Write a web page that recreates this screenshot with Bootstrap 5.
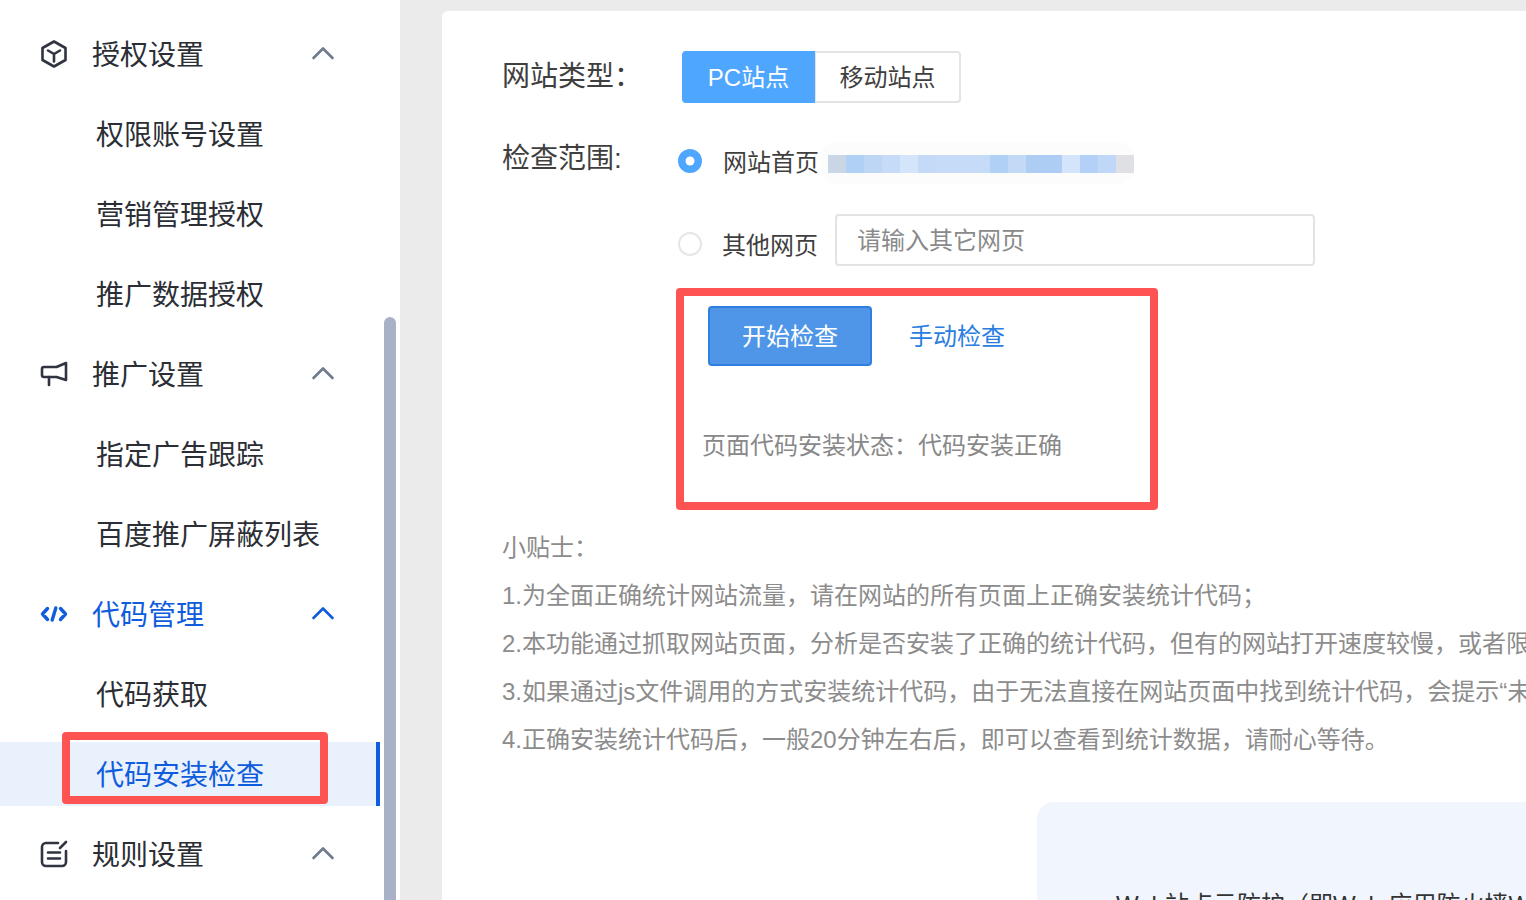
<!DOCTYPE html>
<html lang="zh-CN">
  <head>
    <meta charset="UTF-8" />
    <meta name="viewport" content="width=device-width, initial-scale=1.0" />
    <title>代码安装检查</title>
    <link
      href="https://cdn.jsdelivr.net/npm/bootstrap@5.3.0/dist/css/bootstrap.min.css"
      rel="stylesheet"
    />
    <style>
      html,
      body {
        height: 900px;
        overflow: hidden;
      }
      body {
        background: #ebebeb;
        font-family: "Liberation Sans", "Noto Sans CJK SC", sans-serif;
        color: #3a3a3a;
      }
      .side-panel {
        width: 400px;
        height: 900px;
        background: #fff;
      }
      .side-menu {
        width: 380px;
        padding-top: 22px;
      }
      .side-row {
        height: 64px;
        margin-bottom: 16px;
        font-size: 28px;
        color: #2b2e35;
        position: relative;
      }
      .side-head {
        padding-left: 40px;
      }
      .side-head .side-text {
        margin-left: 24px;
        width: 219px;
        padding-top: 4px;
      }
      .side-sub {
        padding-left: 96px;
        padding-top: 4px;
      }
      .side-head svg {
        display: block;
        fill: none;
        stroke: #2f3440;
        stroke-width: 2.6;
        stroke-linecap: round;
        stroke-linejoin: round;
      }
      .side-head .chevron {
        stroke: #6f7a8c;
        margin-top: -2px;
      }
      .side-head .code-icon {
        stroke-width: 3.4;
      }
      .side-open {
        color: #0f5cdc;
      }
      .side-open svg,
      .side-open .chevron {
        stroke: #0f5cdc;
      }
      .side-active {
        background: #e9f1fd;
        color: #0f5cdc;
        border-right: 4px solid #0f5cdc;
      }
      .mark-menu {
        position: absolute;
        left: 62px;
        top: -10px;
        width: 266px;
        height: 72px;
        border: 8px solid #fd5353;
        border-radius: 4px;
      }
      .scroll-thumb {
        width: 12px;
        height: 583px;
        margin-top: 317px;
        margin-left: 4px;
        background: #a9b1c6;
        border-radius: 6px 6px 0 0;
      }
      .main-area {
        padding: 11px 0 0 42px;
        min-width: 0;
      }
      .main-card {
        background: #fff;
        border-top-left-radius: 6px;
        padding: 40px 0 0 60px;
        height: 889px;
        overflow: hidden;
      }
      .field-label {
        width: 176px;
        font-size: 28px;
        line-height: 40px;
        color: #3f3f3f;
        flex: none;
      }
      .field-scope {
        padding-top: 2px;
      }
      .type-btn {
        width: 147px;
        height: 52px;
        padding: 2px 0 0;
        font-size: 24px;
        line-height: 46px;
        color: #3f3f3f;
        background: #fff;
        border: 2px solid #e3e3e3;
        border-radius: 4px;
      }
      .type-btn.active {
        width: 133px;
        color: #fff;
        background: #4ea6ff;
        border-color: #4ea6ff;
      }
      .type-group {
        margin-left: 4px;
      }
      .radio-line {
        font-size: 24px;
        color: #3f3f3f;
        white-space: nowrap;
      }
      .radio-dot {
        width: 24px;
        height: 24px;
        margin: 0 21px 0 0;
        flex: none;
        border: 2px solid #e6e6e6;
        background-size: 18px;
      }
      .radio-dot:checked {
        background-color: #4ea6ff;
        border-color: #4ea6ff;
      }
      .radio-first {
        height: 48px;
        margin-top: 34px;
      }
      .radio-name {
        padding-top: 3px;
      }
      .radio-second {
        height: 52px;
        margin-top: 29px;
      }
      .radio-second .radio-wrap {
        padding-top: 8px;
      }
      .radio-second .radio-name {
        margin-left: -1px;
        margin-right: 1px;
      }
      .mosaic {
        margin-left: 1px;
        margin-top: 4px;
        padding: 13px 0 11px 8px;
        background: #fcfcfd;
        border-radius: 16px;
      }
      .mosaic span {
        width: 18px;
        height: 18px;
      }
      .other-input {
        width: 480px;
        height: 52px;
        margin-left: 16px;
        padding: 2px 20px 0;
        font-size: 24px;
        color: #3f3f3f;
        border: 2px solid #e3e3e3;
        border-radius: 4px;
      }
      .other-input::placeholder {
        color: #8a8a8a;
      }
      .mark-box {
        width: 482px;
        height: 222px;
        margin: 22px 0 0 174px;
        padding: 10px 0 0 18px;
        border: 8px solid #fd5353;
        border-radius: 4px;
      }
      .check-btn {
        width: 164px;
        height: 60px;
        margin-left: 6px;
        padding: 2px 0 0;
        font-size: 24px;
        background: #4f96e8;
        border: 2px solid #2f7fe0;
        border-radius: 4px;
      }
      .check-link {
        margin-left: 37px;
        padding-top: 2px;
        font-size: 24px;
        color: #2a7de1;
        text-decoration: none;
      }
      .check-state {
        margin-top: 62px;
        font-size: 24px;
        line-height: 36px;
        color: #888;
      }
      .tips {
        margin-top: 14px;
        font-size: 24px;
        line-height: 48px;
        color: #8c8c8c;
        white-space: nowrap;
      }
      .waf-panel {
        margin: 38px 0 0 535px;
        padding: 85px 0 0 79px;
        height: 300px;
        background: #f1f6fe;
        border-top-left-radius: 16px;
        font-size: 24px;
        line-height: 36px;
        color: #333;
        white-space: nowrap;
      }
    </style>
  </head>
  <body class="d-flex">
    <aside class="side-panel d-flex flex-shrink-0">
      <div class="side-menu">
        <div class="side-row side-head d-flex align-items-center">
          <svg width="28" height="28" viewBox="0 0 28 28">
            <path d="M14 1.500 25.500 8v12L14 26.500 2.500 20V8z" />
            <path d="M8 10.500 14 14l6-3.500M14 14v7.500" />
          </svg>
          <span class="side-text">授权设置</span>
          <svg class="chevron" width="24" height="14" viewBox="0 0 24 14"><path d="M2.500 12 12 2.500 21.500 12" /></svg>
        </div>
        <div class="side-row side-sub d-flex align-items-center">权限账号设置</div>
        <div class="side-row side-sub d-flex align-items-center">营销管理授权</div>
        <div class="side-row side-sub d-flex align-items-center">推广数据授权</div>
        <div class="side-row side-head d-flex align-items-center">
          <svg width="28" height="28" viewBox="0 0 28 28">
            <path d="M26 3v17L16.500 17H4a2 2 0 0 1-2-2V9a2 2 0 0 1 2-2h12.500z" />
            <path d="M9 17v8" />
          </svg>
          <span class="side-text">推广设置</span>
          <svg class="chevron" width="24" height="14" viewBox="0 0 24 14"><path d="M2.500 12 12 2.500 21.500 12" /></svg>
        </div>
        <div class="side-row side-sub d-flex align-items-center">指定广告跟踪</div>
        <div class="side-row side-sub d-flex align-items-center">百度推广屏蔽列表</div>
        <div class="side-row side-head side-open d-flex align-items-center">
          <svg class="code-icon" width="28" height="28" viewBox="0 0 28 28">
            <path d="M7.500 8.500 2.500 14l5 5.500M20.500 8.500l5 5.500-5 5.500M15.800 8l-3.600 12" />
          </svg>
          <span class="side-text">代码管理</span>
          <svg class="chevron" width="24" height="14" viewBox="0 0 24 14"><path d="M2.500 12 12 2.500 21.500 12" /></svg>
        </div>
        <div class="side-row side-sub d-flex align-items-center">代码获取</div>
        <div class="side-row side-sub side-active d-flex align-items-center">
          代码安装检查
          <div class="mark-menu"></div>
        </div>
        <div class="side-row side-head d-flex align-items-center">
          <svg width="28" height="28" viewBox="0 0 28 28">
            <path d="M18 3H6a4 4 0 0 0-4 4v15a4 4 0 0 0 4 4h16a4 4 0 0 0 4-4V11" />
            <path d="M8 12.500h12M8 18.500h12M20 8l6-6" />
          </svg>
          <span class="side-text">规则设置</span>
          <svg class="chevron" width="24" height="14" viewBox="0 0 24 14"><path d="M2.500 12 12 2.500 21.500 12" /></svg>
        </div>
      </div>
      <div class="scroll-thumb"></div>
    </aside>

    <main class="main-area flex-grow-1">
      <div class="main-card">
        <div class="d-flex align-items-center">
          <div class="field-label">网站类型&#xFF1A;</div>
          <div class="btn-group type-group" role="group">
            <button type="button" class="btn type-btn active">PC站点</button>
            <button type="button" class="btn type-btn">移动站点</button>
          </div>
        </div>

        <div class="d-flex">
          <div class="field-label field-scope radio-first">检查范围:</div>
          <div>
            <div class="radio-line radio-first d-flex align-items-center">
              <input class="form-check-input radio-dot" type="radio" name="scope" checked />
              <span class="radio-name">网站首页</span>
              <div class="mosaic d-flex" id="mosaic"></div>
            </div>
            <div class="radio-line radio-second d-flex">
              <div class="radio-wrap d-flex align-items-center">
                <input class="form-check-input radio-dot" type="radio" name="scope" />
                <span class="radio-name">其他网页</span>
              </div>
              <input class="form-control other-input" type="text" placeholder="请输入其它网页" />
            </div>
          </div>
        </div>

        <div class="mark-box">
          <div class="d-flex align-items-center">
            <button type="button" class="btn btn-primary check-btn">开始检查</button>
            <a href="#" class="check-link">手动检查</a>
          </div>
          <div class="check-state">页面代码安装状态&#xFF1A;代码安装正确</div>
        </div>

        <div class="tips">
          <div>小贴士&#xFF1A;</div>
          <div>1.为全面正确统计网站流量&#xFF0C;请在网站的所有页面上正确安装统计代码&#xFF1B;</div>
          <div>2.本功能通过抓取网站页面&#xFF0C;分析是否安装了正确的统计代码&#xFF0C;但有的网站打开速度较慢&#xFF0C;或者限</div>
          <div>3.如果通过js文件调用的方式安装统计代码&#xFF0C;由于无法直接在网站页面中找到统计代码&#xFF0C;会提示“未</div>
          <div>4.正确安装统计代码后&#xFF0C;一般20分钟左右后&#xFF0C;即可以查看到统计数据&#xFF0C;请耐心等待。</div>
        </div>

        <div class="waf-panel">Web站点云防护&#xFF08;即Web 应用防火墙W</div>
      </div>
    </main>

    <script src="https://cdn.jsdelivr.net/npm/bootstrap@5.3.0/dist/js/bootstrap.bundle.min.js"></script>
    <script>
      // pixelated website address
      const cores = [
        "#c8d6e5", "#b0d0f6", "#bdd6f5", "#c6dbf7", "#d3e4fb", "#c4daf7",
        "#c6dbf7", "#c6dbf7", "#c6dbf7", "#b0d0f5", "#c3daf7", "#aecdf4",
        "#aecdf4", "#d3e4fb", "#b3d1f6", "#c0d8f7", "#dfe0e5",
      ];
      document.getElementById("mosaic").innerHTML = cores
        .map((cor) => `<span style="background:${cor}"></span>`)
        .join("");
    </script>
  </body>
</html>
